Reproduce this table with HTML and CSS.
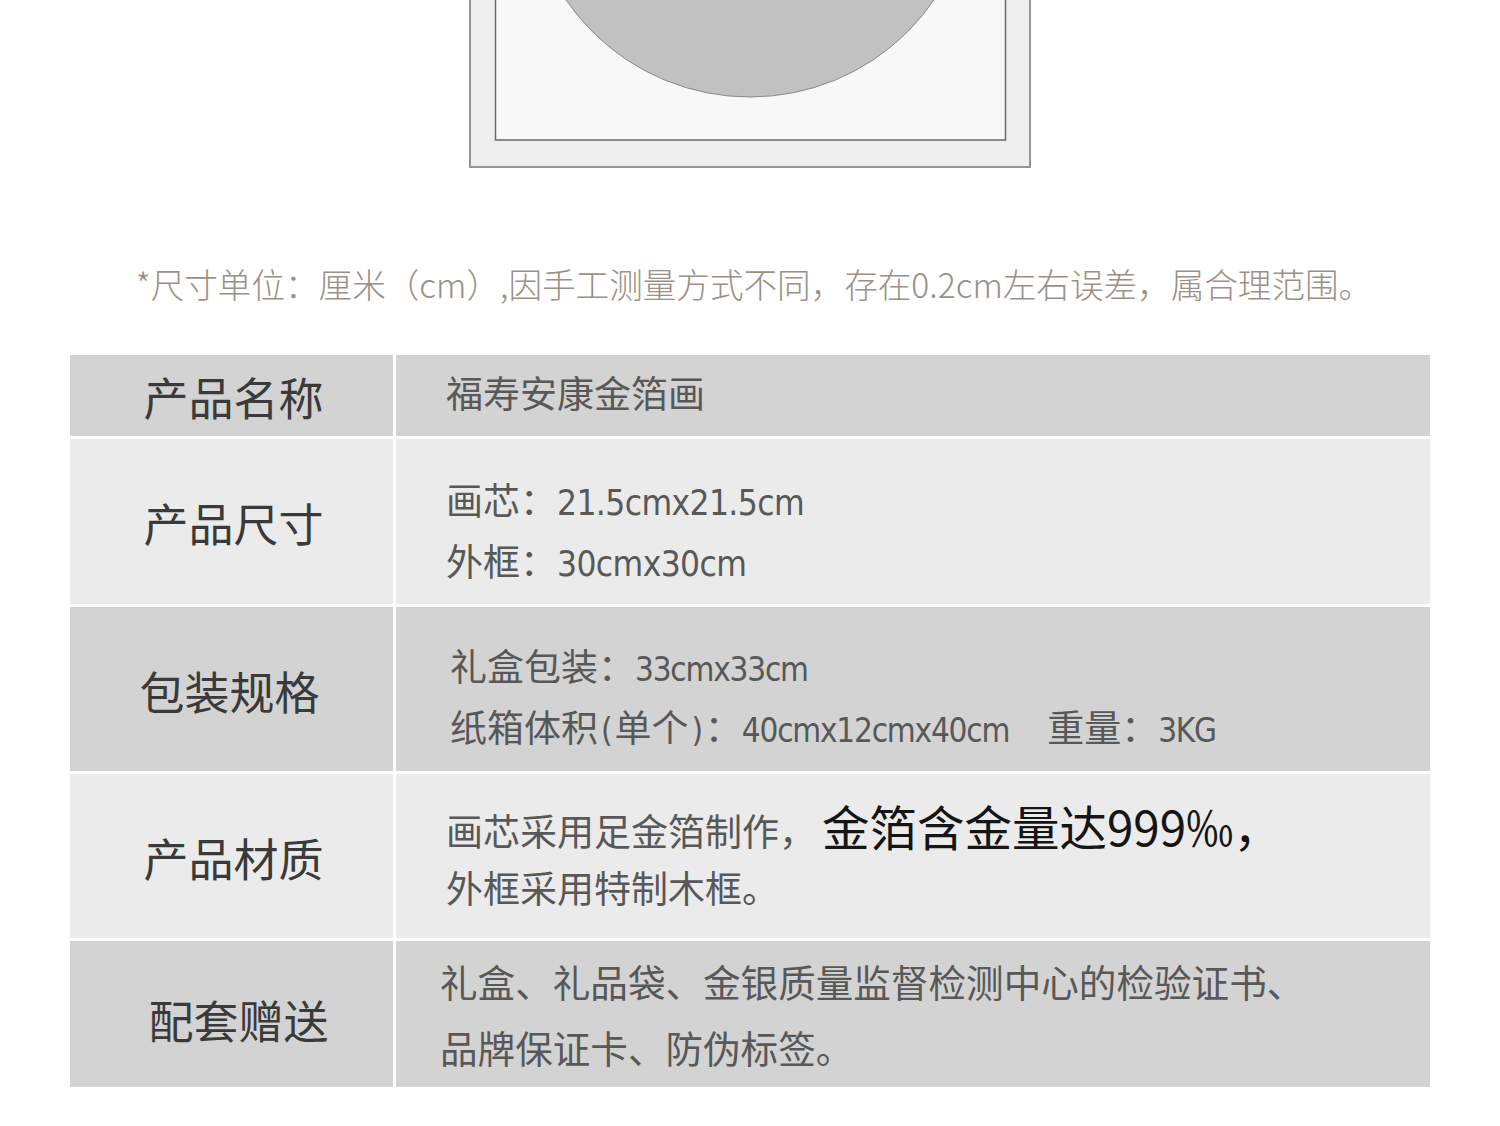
FILE: index.html
```html
<!DOCTYPE html>
<html lang="zh-CN">
<head>
<meta charset="utf-8">
<title>福寿安康金箔画</title>
<link rel="stylesheet" href="styles.css">
</head>
<body>
<div class="page">
  <div class="frame-wrap">
    <svg class="frame" width="562" height="168" viewBox="0 0 562 168" xmlns="http://www.w3.org/2000/svg">
      <rect x="1" y="-10" width="560" height="177" fill="#eeeeee" stroke="#959595" stroke-width="2"/>
      <rect x="26.5" y="-10" width="510" height="150" fill="#f8f8f8" stroke="#6a6a6a" stroke-width="1.5"/>
      <circle cx="281" cy="-126" r="223" fill="#c1c1c1" stroke="#8a8a8a" stroke-width="1"/>
    </svg>
  </div>

  <p class="note">*尺寸单位：厘米（cm）,因手工测量方式不同，存在0.2cm左右误差，属合理范围。</p>

  <div class="spec">
    <div class="cell label dark">产品名称</div>
    <div class="cell value dark r1"><span class="line">福寿安康金箔画</span></div>

    <div class="cell label light">产品尺寸</div>
    <div class="cell value light r2">
      <span class="line">画芯：<span class="num">21.5cmx21.5cm</span></span>
      <span class="line">外框：<span class="num">30cmx30cm</span></span>
    </div>

    <div class="cell label dark r3l">包装规格</div>
    <div class="cell value dark r3">
      <span class="line">礼盒包装：<span class="num">33cmx33cm</span></span>
      <span class="line">纸箱体积<span class="num paren">(</span>单个<span class="num paren">)</span>：<span class="num">40cmx12cmx40cm</span><span class="sp"></span>重量：<span class="num">3KG</span></span>
    </div>

    <div class="cell label light">产品材质</div>
    <div class="cell value light">
      <span class="line">画芯采用足金箔制作，<strong class="hl">金箔含金量达999‰，</strong></span>
      <span class="line">外框采用特制木框。</span>
    </div>

    <div class="cell label dark r5l">配套赠送</div>
    <div class="cell value dark r5">
      <span class="line">礼盒、礼品袋、金银质量监督检测中心的检验证书、</span>
      <span class="line">品牌保证卡、防伪标签。</span>
    </div>
  </div>
</div>
</body>
</html>
```

FILE: styles.css
```css
html, body {
  margin: 0;
  padding: 0;
  background: #ffffff;
}

body {
  font-family: "Noto Sans CJK SC", "Noto Sans", sans-serif;
  width: 1500px;
  height: 1126px;
  overflow: hidden;
}

.page {
  display: flex;
  flex-direction: column;
}

.frame-wrap {
  display: flex;
  justify-content: flex-start;
  padding-left: 469px;
  height: 168px;
}

.frame {
  display: block;
}

.note {
  margin: 96px 0 51px 0;
  height: 40px;
  line-height: 40px;
  text-align: center;
  font-size: 33.6px;
  font-weight: 300;
  color: #9b9086;
  white-space: nowrap;
  padding-left: 8px;
}

.spec {
  margin: 0 70px;
  width: 1360px;
  display: grid;
  grid-template-columns: 323px 1fr;
  grid-template-rows: 81px 165px 164px 164px 146px;
  column-gap: 3px;
  row-gap: 3px;
  background: #ffffff;
}

.cell {
  display: flex;
  box-sizing: border-box;
}

.dark {
  background: #d3d3d3;
}

.light {
  background: #ebebeb;
}

.label {
  align-items: center;
  justify-content: center;
  font-size: 45px;
  color: #3a3a3a;
  padding-top: 2px;
  padding-left: 4px;
}

.label.r3l {
  padding-left: 0;
  padding-right: 4px;
}

.label.r5l {
  padding-top: 10px;
  padding-left: 14px;
}

.value {
  flex-direction: column;
  justify-content: center;
  padding-left: 50px;
  font-size: 37px;
  color: #585858;
}

.value .line {
  display: block;
  line-height: 57px;
  white-space: nowrap;
}

.value.r1 {
  padding-bottom: 6px;
}

.value.r2 {
  padding-top: 20px;
}

.value.r3 {
  padding-left: 54px;
  padding-top: 18px;
}

.value.r5 {
  padding-left: 44px;
  font-size: 37.6px;
}

.value.r5 .line {
  line-height: 66px;
}

.num {
  font-family: "Liberation Sans Narrow", "DejaVu Sans Condensed", "Noto Sans", sans-serif;
  font-size: 35px;
  letter-spacing: -0.6px;
}

.r3 .num {
  font-size: 33px;
  letter-spacing: -1.2px;
}

.r3 .paren {
  margin: 0 3px;
}

.sp {
  display: inline-block;
  width: 38px;
}

.hl {
  font-weight: 400;
  font-size: 47.5px;
  color: #151515;
  margin-left: 6px;
}
```
